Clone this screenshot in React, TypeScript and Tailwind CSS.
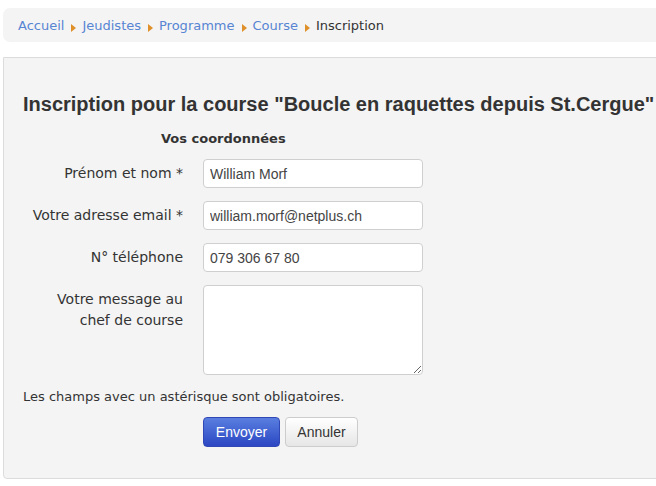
import React from "react";

const Arrow = () => (
  <svg width="5" height="8" viewBox="0 0 5 8" className="ml-[7px] mr-[6px] mt-[4px] shrink-0">
    <path d="M0 0 L5 4 L0 8 Z" fill="#e0902a" />
  </svg>
);

const verdana = "font-['DejaVu_Sans',Verdana,sans-serif]";
const arial = "font-['Liberation_Sans',Arial,sans-serif]";

export default function App() {
  const links = ["Accueil", "Jeudistes", "Programme", "Course"];
  return (
    <div className={`w-[656px] h-[486px] bg-white overflow-hidden ${verdana} text-[13px] text-[#333]`}>
      <div className="pt-[8px] pl-[3px]">
        <div className="h-[34px] w-[700px] bg-[#f4f4f4] rounded-[7px] flex items-center pl-[15px] pt-[2px] text-[13px]">
          {links.map((l) => (
            <React.Fragment key={l}>
              <span className="text-[#5785d3]">{l}</span>
              <Arrow />
            </React.Fragment>
          ))}
          <span className="text-[#333]">Inscription</span>
        </div>
      </div>
      <div className="mt-[15px] ml-[3px] w-[700px] h-[422px] bg-[#f4f4f4] border border-[#dcdcdc] rounded-bl-[4px] pl-[19px] pt-[34px]">
        <h1 className={`${arial} font-bold text-[20px] leading-[24px] text-[#333] whitespace-nowrap`}>
          Inscription pour la course "Boucle en raquettes depuis St.Cergue"
        </h1>
        <div className="mt-[15px] ml-[138px] font-bold text-[13px] leading-[16px]">Vos coordonnées</div>
        <div className="mt-[12px] flex flex-col gap-[13px]">
          {[
            ["Prénom et nom *", "William Morf"],
            ["Votre adresse email *", "william.morf@netplus.ch"],
            ["N° téléphone", "079 306 67 80"],
          ].map(([label, value]) => (
            <div key={label} className="flex items-center">
              <div className="w-[160px] text-right text-[14px] whitespace-nowrap">{label}</div>
              <input
                readOnly
                value={value}
                className={`ml-[20px] w-[220px] h-[29px] bg-white border border-[#cfcfcf] rounded-[4px] px-[6px] ${arial} text-[14px] text-[#444] outline-none`}
              />
            </div>
          ))}
          <div className="flex items-start">
            <div className="w-[160px] text-right text-[14px] leading-[21px] pt-[4px]">
              Votre message au
              <br />
              chef de course
            </div>
            <textarea
              readOnly
              className="ml-[20px] w-[220px] h-[90px] bg-white border border-[#cfcfcf] rounded-[4px] outline-none"
            />
          </div>
        </div>
        <div className="mt-[14px] leading-[16px]">Les champs avec un astérisque sont obligatoires.</div>
        <div className="mt-[12px] ml-[180px] flex gap-[5px]">
          <button
            className={`${arial} w-[77px] h-[30px] rounded-[4px] border border-[#2f48b5] bg-gradient-to-b from-[#5a7ee0] to-[#2d46c2] text-white text-[14px]`}
          >
            Envoyer
          </button>
          <button
            className={`${arial} w-[73px] h-[30px] rounded-[4px] border border-[#cccccc] bg-gradient-to-b from-white to-[#e6e6e6] text-[#333] text-[14px]`}
          >
            Annuler
          </button>
        </div>
      </div>
    </div>
  );
}
